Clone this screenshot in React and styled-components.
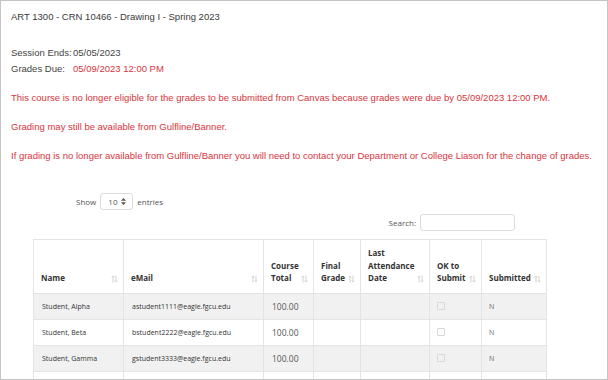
import React from "react";
import styled, { createGlobalStyle } from "styled-components";

const GlobalStyle = createGlobalStyle`
  body {
    margin: 0;
    background: #ffffff;
  }
`;

const students = [
  { name: "Student, Alpha", email: "astudent1111@eagle.fgcu.edu", total: "100.00", submitted: "N" },
  { name: "Student, Beta", email: "bstudent2222@eagle.fgcu.edu", total: "100.00", submitted: "N" },
  { name: "Student, Gamma", email: "gstudent3333@eagle.fgcu.edu", total: "100.00", submitted: "N" },
  { name: "", email: "", total: "", submitted: "" }
];

const columns = [
  { label: ["Name"], width: 90 },
  { label: ["eMail"], width: 140 },
  { label: ["Course", "Total"], width: 50 },
  { label: ["Final", "Grade"], width: 47 },
  { label: ["Last", "Attendance", "Date"], width: 69 },
  { label: ["OK to", "Submit"], width: 52 },
  { label: ["Submitted"], width: 65 }
];

const SortIcon = () => (
  <S.Sort>
    <svg width="7" height="8" viewBox="0 0 7 8">
      <path d="M2 7.5V1M0.6 2.4L2 1l1.4 1.4" stroke="#c8c8c8" strokeWidth="0.8" fill="none" />
      <path d="M5 0.5V7M3.6 5.6L5 7l1.4-1.4" stroke="#c8c8c8" strokeWidth="0.8" fill="none" />
    </svg>
  </S.Sort>
);

const SelectArrows = () => (
  <svg width="5" height="7" viewBox="0 0 5 7">
    <path d="M2.5 0L5 2.8H0z M2.5 7L0 4.2h5z" fill="#555" />
  </svg>
);

export default function App() {
  return (
    <S.Frame>
      <GlobalStyle />
      <S.Title>ART 1300 - CRN 10466 - Drawing I - Spring 2023</S.Title>
      <S.Meta>
        <S.Label>Session Ends:</S.Label>
        <S.Value>05/05/2023</S.Value>
        <S.Label>Grades Due:</S.Label>
        <S.Value $due>05/09/2023 12:00 PM</S.Value>
      </S.Meta>
      <S.Notice>
        This course is no longer eligible for the grades to be submitted from Canvas because grades were due by
        05/09/2023 12:00 PM.
      </S.Notice>
      <S.Notice>Grading may still be available from Gulfline/Banner.</S.Notice>
      <S.Notice>
        If grading is no longer available from Gulfline/Banner you will need to contact your Department or College
        Liason for the change of grades.
      </S.Notice>

      <S.Wrapper>
        <S.Length>
          Show
          <S.Select>
            10
            <SelectArrows />
          </S.Select>
          entries
        </S.Length>
        <S.Search>
          Search:
          <S.SearchInput type="text" />
        </S.Search>
        <S.Table>
          <colgroup>
            {columns.map((c, i) => (
              <S.Col key={i} $w={c.width} />
            ))}
          </colgroup>
          <thead>
            <tr>
              {columns.map((c, i) => (
                <S.Th key={i}>
                  <S.ThInner>
                    <span>
                      {c.label.map((l, j) => (
                        <div key={j}>{l}</div>
                      ))}
                    </span>
                    <SortIcon />
                  </S.ThInner>
                </S.Th>
              ))}
            </tr>
          </thead>
          <tbody>
            {students.map((s, i) => (
              <S.Row key={i} $odd={i % 2 === 0}>
                <S.Td>{s.name}</S.Td>
                <S.Td>{s.email}</S.Td>
                <S.Td $num>{s.total}</S.Td>
                <S.Td />
                <S.Td />
                <S.Td $tight>{s.name && <S.Check />}</S.Td>
                <S.Td $tight $muted>{s.submitted}</S.Td>
              </S.Row>
            ))}
          </tbody>
        </S.Table>
      </S.Wrapper>
    </S.Frame>
  );
}

const S = {};

S.Frame = styled.div`
  width: 608px;
  height: 380px;
  box-sizing: border-box;
  border: 1px solid #c4c4c4;
  overflow: hidden;
  padding: 10px 10px 0 10px;
  font-family: "Liberation Sans", Arial, sans-serif;
  font-size: 9.5px;
  color: #3a3a3a;
`;

S.Title = styled.div`
  line-height: 12px;
`;

S.Meta = styled.div`
  display: grid;
  grid-template-columns: 62px auto;
  row-gap: 4px;
  margin-top: 24px;
  line-height: 12px;
  white-space: nowrap;
`;

S.Label = styled.div`
  color: #444;
`;

S.Value = styled.div`
  color: ${p => (p.$due ? "#d8343c" : "#444")};
`;

S.Notice = styled.p`
  margin: 17px 0 0 0;
  line-height: 12px;
  color: #d8343c;
  white-space: nowrap;
`;

S.Wrapper = styled.div`
  margin: 30px 0 0 22px;
  width: 513px;
  font-family: "Open Sans", sans-serif;
  font-size: 8px;
  color: #555;
`;

S.Length = styled.div`
  display: flex;
  align-items: center;
  gap: 4px;
  padding-left: 43px;
  height: 18px;
`;

S.Select = styled.div`
  display: flex;
  align-items: center;
  justify-content: space-between;
  box-sizing: border-box;
  width: 33px;
  height: 17px;
  padding: 0 6px 0 7px;
  border: 1px solid #dcdcdc;
  border-radius: 3px;
  color: #555;
`;

S.Search = styled.div`
  display: flex;
  align-items: center;
  justify-content: flex-end;
  gap: 4px;
  padding-right: 31px;
  margin-top: 4px;
`;

S.SearchInput = styled.input`
  box-sizing: border-box;
  width: 95px;
  height: 17px;
  border: 1px solid #dcdcdc;
  border-radius: 3px;
  margin: 0;
  padding: 0;
`;

S.Table = styled.table`
  margin-top: 8px;
  width: 513px;
  table-layout: fixed;
  border-collapse: collapse;
  border: 1px solid #e4e4e4;
`;

S.Col = styled.col`
  width: ${p => p.$w}px;
`;

S.Th = styled.th`
  border-left: 1px solid #e4e4e4;
  border-bottom: 1px solid #e4e4e4;
  padding: 7px 5px 8px 7px;
  vertical-align: bottom;
  text-align: left;
  font-size: 8px;
  font-weight: 700;
  line-height: 12.5px;
  color: #333;
`;

S.ThInner = styled.div`
  display: flex;
  align-items: flex-end;
  justify-content: space-between;
`;

S.Sort = styled.span`
  display: flex;
  padding-bottom: 2px;
`;

S.Row = styled.tr`
  height: 26px;
  background: ${p => (p.$odd ? "#f1f1f1" : "#ffffff")};
  border-bottom: 1px solid #e4e4e4;
`;

S.Td = styled.td`
  border-left: 1px solid #e4e4e4;
  padding: 0 ${p => (p.$tight ? "7px" : "8px")};
  font-size: ${p => (p.$num ? "8.5px" : "7px")};
  color: ${p => (p.$num ? "#555" : p.$muted ? "#666" : "#333")};
  white-space: nowrap;
`;

S.Check = styled.span`
  display: block;
  width: 6px;
  height: 6px;
  border: 1px solid #d8d8d8;
  border-radius: 1px;
`;
